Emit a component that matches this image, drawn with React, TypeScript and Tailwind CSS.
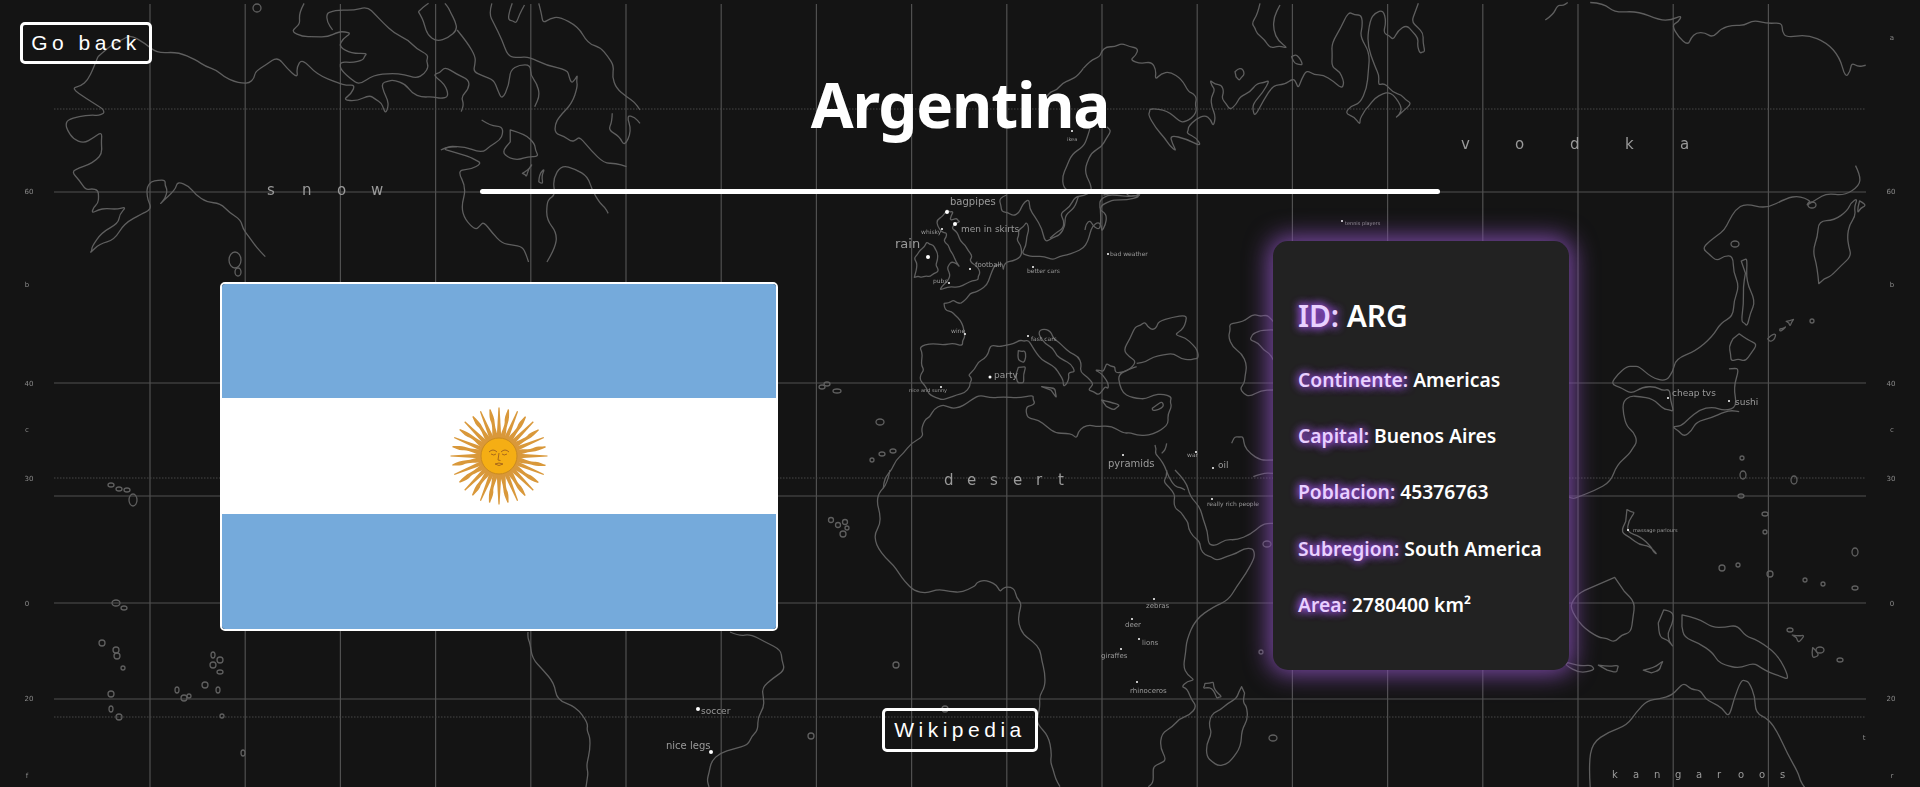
import React from 'react';

// coastlines traced per map region; each group has its own scale from the crop it was read off
const coastA = [
  // north america, x/2.45 y/3
  'M240 170 L215 240 L175 265 L250 325 L255 340 L225 345 L165 360 L165 390 L205 430 L250 395 L250 460 L215 495 L175 515 L210 570 L240 570 L240 610 L225 640 L260 625 L310 620 L290 670 L225 740 L220 760 L280 720 L350 640 L370 620 L360 580 L370 545 L405 540 L410 570 L390 615 L420 580 L435 545 L480 585 L540 610 L590 660 L610 710 L650 770',
  'M240 170 L280 130 L320 105 L385 160 L480 180 L530 210 L575 245 L610 250 L625 215 L680 170 L730 235 L740 175 L830 250 L870 255 L840 300 L905 285 L935 310 L945 340 L950 300 L935 250 L965 240 L1010 280 L1060 290 L1100 290 L1060 225 L1090 200 L1150 240 L1130 290 L1130 335',
  'M745 10 L735 70 L715 95 L770 110 L830 95 L860 100 L830 140 L900 160 L890 180 L835 185 L840 215 L880 255 L960 220 L1020 235 L1050 200 L1050 165 L1000 120 L940 70 L900 20 L830 30 L800 40 L815 90',
  'M1025 35 L1050 10 M1025 35 L1040 75 L1070 125 L1120 90 L1105 40 L1090 10 M1120 90 L1165 170 L1160 215 L1210 240 L1230 300 L1250 210 L1300 195 L1315 250 L1310 320',
  'M1180 360 L1230 380 L1225 420 L1180 460 L1080 445 L1150 470 L1180 490 L1120 510 L1130 620 L1165 690 L1185 665 L1230 730 L1280 740 L1295 786',
  'M1250 390 L1310 430 L1320 470 L1270 480 L1230 455 Z',
  'M1205 10 L1210 70 L1245 170 L1295 170 L1390 210 L1400 250 L1415 225 L1415 260 L1370 350 L1360 400 L1400 425 L1420 410 L1480 490 L1535 500',
  'M1340 786 L1365 700 L1340 610 L1360 585 L1375 495 L1440 530 L1470 610 L1490 640',
  'M1255 10 L1245 60 L1265 70 L1285 15 M1320 10 L1330 70 L1370 50 L1440 130 L1490 170 L1500 230 L1535 290 L1568 330',
  'M1500 340 L1490 390 L1530 440 L1535 345 L1568 370',
  'M1080 450 L1120 440 M1280 520 L1305 490 L1290 530 Z M1320 545 L1335 505 L1330 550 Z',
];

const coastB = [
  // europe, med, x/3 y/3
  'M433 262 L440 235 L432 205 L450 180 L470 155 L490 165 L503 190 L497 225 L505 245 L480 260 L455 262 Z',
  'M531 60 L500 90 L515 125 L530 130 L522 150 L535 165 L550 195 L570 232 L545 215 L532 235 L540 258 L520 285 L510 300 L540 290 L590 280 L625 270 L630 250 L615 225 L600 210 L605 195 L585 165 L565 135 L545 115 L570 95 L560 85 L540 90 L550 65 Z',
  'M710 15 L688 30 L695 65 L730 78 L755 50 L778 28 L795 80 L825 158 L870 135 L885 75 L925 20',
  'M572 340 L600 310 L630 300 L660 260 L675 225 L695 220 L700 240 L710 215 L745 205 L755 185 L740 150 L745 120 L770 95 L770 140 L755 190 L790 200 L850 210 L890 195 L940 175 L960 130 L985 95 L995 125 L1010 80 L990 60 L990 30 L1040 15 L1110 15',
  'M522 340 L530 362 L555 375 L580 410 L585 440 L578 468 L520 465 L448 470 L455 510 L462 540 L450 570 L470 595 L490 620 L515 630 L560 615 L600 590 L605 570 L595 555 L625 515 L655 490 L665 465 L710 465 L750 450 L775 450 L800 490 L835 520 L870 555 L880 590 L895 570 L895 550 L915 545 L880 510 L850 475 L810 440 L810 420 L835 420 L850 445 L880 470 L925 500 L930 545 L970 580 L955 600 L985 615 L1005 590 L1015 595 L1005 565 L975 540 L1000 545 L1010 520 L1035 530 L1040 550 L1100 515 L1060 480 L1095 410 L1125 395 L1150 420 L1165 395 L1250 375 L1240 415 L1215 435 L1270 465 L1285 505 L1260 510 L1210 490 L1150 500 L1100 520',
  'M522 340 L550 330 L572 340',
  'M1100 530 L1045 555 L1060 610 L1100 625 L1150 615 L1205 620 L1205 650 L1195 700 L1165 725 L1100 735 L1060 730 L980 710 L940 710 L920 745 L890 730 L830 710 L775 685 L770 650 L795 640 L790 615 L700 620 L630 615 L590 640 L545 655 L515 645 L480 680 L460 700 L460 740 L400 790 L365 840 L340 895',
  'M1155 765 L1155 790 L1185 830 L1215 890 L1245 900 M1190 760 L1175 790',
  'M1385 760 L1395 740 L1420 740 L1440 790 L1510 810 M1450 860 L1510 850',
  'M1510 395 L1490 375 L1450 372 L1378 400 L1375 440 L1415 490 L1425 560 L1410 595 L1440 620 L1510 600',
  'M1510 420 L1450 430 L1440 450 L1480 480 L1510 510',
  'M1150 5 L1100 15',
  'M815 590 L855 595 L860 625 Z M995 630 L1050 645 L1030 660 Z M1147 655 L1175 635 L1180 650 L1150 662 Z',
  'M745 482 L765 482 L762 518 L745 510 Z M745 532 L768 530 L762 578 L742 578 Z',
];

const coastC = [
  // africa, x/3 y/3
  'M360 0 L325 70 L330 130 L315 190 L325 235 L370 285 L405 335 L470 370 L540 365 L610 350 L620 338 L660 335 L690 365 L705 352 L735 360 L755 400 L745 460 L790 515 L815 570 L825 650 L810 710 L800 760 L845 850 L850 900 L870 950',
  'M1190 0 L1180 35 L1215 75 L1215 115 L1245 145 L1255 175 L1290 215 L1305 255 L1340 272 L1400 250 L1448 235 L1450 270 L1400 350 L1330 410 L1250 510 L1240 590 L1275 630 L1235 650 L1255 665 L1280 710 L1230 745 L1175 790 L1190 870 L1150 890 L1150 930 L1135 950',
  'M1215 0 L1260 80 L1300 150 L1315 220 L1340 225 L1400 210 L1475 165 L1510 160',
  'M1415 650 L1400 685 L1350 720 L1320 745 L1325 790 L1310 860 L1345 888 L1385 870 L1415 780 L1430 710 L1420 690 Z',
  'M1305 640 L1330 635 L1335 660 L1355 680 L1340 685 L1325 655 L1300 655 Z',
];

const coastD = [
  // scandinavia, russia, x/3 y/3
  'M200 380 L212 395 L185 440 L140 490 L140 530 L155 575 L105 590 L60 640 L70 685 L30 715',
  'M150 385 L130 440 L80 500 L70 560 L95 580',
  'M190 585 L250 565 L270 590 L300 590 L220 600 L180 620 L180 690 L150 660 L135 690',
  'M130 205 L180 170 L200 140 L245 130 L295 145 L270 180 L335 185 L345 240 L390 215 L445 275 L470 295 L470 330 L445 360 L420 365 L330 325 L325 345 L375 415 L410 455 L390 405 L485 440 L440 400 L445 380 L495 345 L520 380 L515 320 L525 270 L510 240 L545 255 L545 295 L570 330 L600 290 L650 250 L690 240 L640 310 L645 350 L700 255 L760 235 L775 265 L800 210 L850 225 L905 265 L910 240 L875 200 L875 130 L925 35 L965 45 L960 110 L985 215 L960 310 L915 340 L960 375 L970 340 L985 320 L1030 280 L1060 285 L1085 325 L1065 355 L1115 310 L1085 285 L1040 255 L1015 255 L1005 200 L990 60 L1030 30 L1030 100 L1060 120 L1100 75 L1135 115 L1140 160 L1155 155 L1150 100 L1115 65 L1135 10',
  'M660 10 L635 70 L650 100 L690 145 L745 145 L700 90 L720 15',
  'M585 215 L605 205 L612 225 L598 242 Z',
  'M755 170 L770 165 L788 195 L765 190 Z',
  'M130 205 L90 240 L50 270 L20 290',
];

const coastE = [
  // east asia and oceania, x/2.45 y/1.992
  'M650 40 L680 10 L705 5',
  'M760 5 L820 25 L930 40 L985 30 L960 50 L1000 90 L1020 65 L1060 75 L1110 50 L1160 40 L1230 45 L1240 75 L1340 85 L1385 155 L1400 125 L1435 130',
  'M1410 330 L1420 370 L1340 385 L1290 410 L1300 400 L1240 395 L1140 405 L1100 440 L1070 470 L1035 495 L1070 520 L1110 510 L1125 570 L1110 630 L1060 670 L970 715 L945 760 L880 730 L850 730 L810 765 L860 785 L920 770 L955 775 L965 820 L940 815 L880 790 L840 800 L850 850 L875 880 L855 905 L810 960 L730 990 L708 990',
  'M1320 565 L1305 500 L1320 440 L1390 420 L1415 395 L1410 430 L1390 470 L1400 510 L1350 550 Z',
  'M1420 400 L1435 410 L1415 425 Z',
  'M1130 520 L1145 515 L1165 600 L1145 650 L1130 640 L1135 570 Z',
  'M1125 665 L1170 685 L1140 720 L1105 720 L1100 690 Z',
  'M1100 735 L1125 735 L1120 810 L1060 810 L1000 835 L960 850 L990 870 L1020 840 L1090 820 L1125 820',
  'M850 1015 L870 1020 L850 1060 L910 1090 L925 1105 L880 1085 L835 1060 Z',
  'M1240 640 L1260 635 L1250 650 Z M1195 675 L1215 665 L1205 680 Z M1225 655 L1240 650 L1225 660 Z',
  'M820 1150 L735 1180 L710 1210 L780 1270 L820 1280 L860 1260 L870 1200 Z',
  'M940 1215 L965 1225 L950 1260 L965 1290 L930 1270 Z',
  'M985 1225 L1060 1250 L1120 1245 L1170 1275 L1250 1355 L1200 1340 L1160 1320 L1090 1325 L1060 1300 L990 1270 Z',
  'M705 1320 L760 1325 L770 1335 L700 1325 Z M780 1325 L830 1325 L825 1340 Z M890 1335 L940 1315 L930 1335 Z',
  'M760 1568 L765 1480 L850 1445 L900 1395 L960 1385 L990 1360 L1030 1375 L1060 1400 L1100 1430 L1130 1355 L1150 1360 L1165 1420 L1220 1460 L1270 1540 L1285 1568',
  'M1255 1265 L1285 1265 L1270 1280 Z M1305 1290 L1320 1305 L1305 1310 Z',
];

// the traced points are sparse, so add a wobble and round them off to read as a coast
function organic(d: string) {
  return d
    .split('M')
    .filter((s) => s.trim())
    .map((sub) => {
      const closed = sub.includes('Z');
      const nums = sub.replace(/[LZ]/g, ' ').trim().split(/\s+/).map(Number);
      const pts: [number, number][] = [];
      for (let i = 0; i < nums.length; i += 2) pts.push([nums[i], nums[i + 1]]);
      const dense: [number, number][] = [];
      const count = closed ? pts.length : pts.length - 1;
      for (let i = 0; i < count; i++) {
        const a = pts[i];
        const b = pts[(i + 1) % pts.length];
        const dx = b[0] - a[0];
        const dy = b[1] - a[1];
        const k = Math.sin(a[0] * 0.78 + a[1] * 12.98 + i) * 0.16;
        dense.push(a, [a[0] + dx / 2 - dy * k, a[1] + dy / 2 + dx * k]);
      }
      if (!closed) dense.push(pts[pts.length - 1]);
      let out = `M${dense[0][0]} ${dense[0][1]}`;
      for (let i = 1; i < dense.length - 1; i++) {
        const mx = (dense[i][0] + dense[i + 1][0]) / 2;
        const my = (dense[i][1] + dense[i + 1][1]) / 2;
        out += ` Q${dense[i][0]} ${dense[i][1]} ${mx} ${my}`;
      }
      const last = dense[dense.length - 1];
      return out + ` L${last[0]} ${last[1]}` + (closed ? ' Z' : '');
    })
    .join(' ');
}

// small islands as cx, cy, rx, ry in full page pixels
const islands: [number, number, number, number][] = [
  [822, 387, 3, 2], [827, 384, 3, 2], [837, 391, 4, 2], [880, 422, 4, 3], [882, 454, 3, 2], [893, 451, 3, 2], [872, 460, 2, 2],
  [831, 520, 2.5, 2.5], [838, 525, 2.5, 2.5], [845, 522, 2.5, 2.5], [847, 528, 2, 2], [843, 534, 3, 3],
  [896, 665, 3, 3], [945, 709, 3, 3], [811, 736, 3, 3], [1273, 738, 4, 3], [1261, 652, 2, 2], [1267, 544, 4, 3],
  [111, 485, 3, 2], [119, 489, 3, 2], [127, 490, 3, 2], [133, 500, 4, 6], [116, 603, 4, 3], [124, 608, 3, 2],
  [116, 650, 3, 3], [123, 668, 2, 2], [102, 643, 3, 3], [117, 656, 3, 3], [111, 694, 3, 3], [119, 717, 3, 3],
  [111, 709, 2, 3], [213, 655, 2, 3], [213, 665, 3, 3], [220, 660, 3, 3], [220, 672, 3, 2], [218, 690, 2, 3],
  [205, 685, 3, 3], [184, 698, 3, 3], [189, 696, 2, 2], [177, 690, 2, 3], [222, 716, 2, 2], [243, 753, 2, 3],
  [257, 8, 4, 4], [1735, 244, 4, 3], [1812, 205, 4, 3], [1812, 321, 2, 2], [1794, 480, 3, 4], [1741, 496, 3, 2],
  [1742, 458, 2, 2], [1743, 475, 3, 4], [1765, 514, 3, 2], [1765, 532, 2, 2], [1855, 552, 3, 4], [1722, 568, 3, 3],
  [1738, 565, 2, 2], [1770, 574, 3, 3], [1805, 580, 2, 2], [1823, 584, 2, 2], [1855, 588, 3, 2],
  [1790, 630, 3, 2], [1820, 650, 4, 3], [1840, 660, 3, 2], [235, 260, 6, 8], [238, 272, 3, 4],
];

type MapLabel = [string, number, number, number];

const labels: MapLabel[] = [
  ['bagpipes', 950, 205, 10], ['men in skirts', 961, 232, 9], ['whisky', 921, 234, 6], ['rain', 895, 248, 13],
  ['football', 975, 267, 7], ['pubs', 933, 283, 6], ['better cars', 1027, 273, 6], ['bad weather', 1110, 256, 6],
  ['wine', 951, 333, 6], ['fast cars', 1031, 341, 6], ['party', 994, 378, 9], ['nice and sunny', 909, 392, 5],
  ['pyramids', 1108, 467, 10], ['war', 1187, 457, 6], ['oil', 1218, 468, 9], ['really rich people', 1207, 506, 6],
  ['zebras', 1146, 608, 7], ['deer', 1125, 627, 7], ['lions', 1142, 645, 7], ['giraffes', 1101, 658, 7],
  ['rhinoceros', 1130, 693, 7], ['soccer', 701, 714, 9], ['nice legs', 666, 749, 10], ['ikea', 1067, 141, 5],
  ['tennis players', 1345, 225, 5], ['cheap tvs', 1672, 396, 9], ['sushi', 1735, 405, 9], ['massage parlours', 1633, 532, 5],
];

const dots: [number, number, number][] = [
  [947, 212, 2], [955, 224, 2], [942, 229, 1], [928, 257, 2], [970, 269, 1], [949, 283, 1], [1033, 267, 1], [1108, 254, 1],
  [965, 334, 1], [1028, 336, 1], [990, 377, 1.5], [941, 387, 1], [1123, 455, 1], [1196, 452, 1], [1213, 468, 1], [1212, 499, 1],
  [1154, 599, 1], [1132, 619, 1], [1139, 639, 1], [1121, 649, 1], [1137, 682, 1], [698, 709, 2], [711, 752, 2],
  [1072, 131, 1], [1342, 221, 1], [1668, 398, 1], [1729, 401, 1], [1628, 530, 1],
];

const spaced: [string, number[], number, number][] = [
  ['snow', [267, 302, 337, 371], 195, 15],
  ['vodka', [1461, 1515, 1570, 1625, 1680], 149, 15],
  ['desert', [944, 967, 990, 1013, 1036, 1058], 485, 15],
  ['kangaroos', [1612, 1633, 1654, 1675, 1696, 1717, 1738, 1759, 1780], 778, 10],
];

const edgeMarks: [string, number, number][] = [
  ['60', 29, 194], ['b', 27, 287], ['40', 29, 386], ['c', 27, 432], ['30', 29, 481], ['0', 27, 606], ['20', 29, 701], ['f', 27, 778],
  ['a', 1892, 40], ['60', 1891, 194], ['b', 1892, 287], ['40', 1891, 386], ['c', 1892, 432], ['30', 1891, 481], ['0', 1892, 606], ['20', 1891, 701], ['t', 1864, 740], ['r', 1892, 778],
];

function Coast({ paths, transform }: { paths: string[]; transform: string }) {
  return (
    <g transform={transform}>
      {paths.map((d) => (
        <path key={d} d={organic(d)} vectorEffect="non-scaling-stroke" />
      ))}
    </g>
  );
}

function WorldMap() {
  const verticals = Array.from({ length: 18 }, (_, i) => 150 + 95.2 * i);
  return (
    <svg className="absolute inset-0 blur-[0.3px]" width="1920" height="787" viewBox="0 0 1920 787" fill="none">
      <g stroke="#505050" strokeWidth="1.2">
        {verticals.map((x) => (
          <line key={x} x1={x} y1="4" x2={x} y2="787" />
        ))}
        {[192, 383, 496, 603, 699].map((y) => (
          <line key={y} x1="54" y1={y} x2="1866" y2={y} />
        ))}
      </g>
      <g stroke="#474747" strokeWidth="1" strokeDasharray="1.5 1.5">
        {[109, 478, 717].map((y) => (
          <line key={y} x1="54" y1={y} x2="1866" y2={y} />
        ))}
      </g>
      <g stroke="#5f5f5f" strokeWidth="1.3" strokeLinejoin="round">
        <Coast paths={coastA} transform="scale(0.40816 0.33333)" />
        <Coast paths={coastB} transform="translate(770 190) scale(0.33333)" />
        <Coast paths={coastC} transform="translate(770 470) scale(0.33333)" />
        <Coast paths={coastD} transform="translate(1040 0) scale(0.33333)" />
        <Coast paths={coastE} transform="translate(1280 0) scale(0.40816 0.50201)" />
        {/* south america below the flag */}
        <path d={organic('M528 632 L530 643 L543 670 L557 700 L588 723 L590 737 L587 763 L588 773 L586 787')} />
        <path d={organic('M730 632 L750 634 L781 650 L785 670 L762 688 L764 707 L758 730 L748 745 L720 753 L709 773 L709 787')} />
        {islands.map(([cx, cy, rx, ry]) => (
          <ellipse key={`${cx}-${cy}`} cx={cx} cy={cy} rx={rx} ry={ry} />
        ))}
      </g>
      <g fill="#fff">
        {dots.map(([cx, cy, r]) => (
          <circle key={`${cx}-${cy}`} cx={cx} cy={cy} r={r} />
        ))}
      </g>
      <g fill="#9a9a9a" fontFamily="'DejaVu Sans', sans-serif">
        {labels.map(([text, x, y, size]) => (
          <text key={text} x={x} y={y} fontSize={size}>{text}</text>
        ))}
        {spaced.map(([word, xs, y, size]) => (
          <text key={word} x={xs.join(' ')} y={y} fontSize={size}>{word}</text>
        ))}
        {edgeMarks.map(([text, x, y], i) => (
          <text key={i} x={x} y={y} fontSize="7" textAnchor="middle" fill="#8a8a8a">{text}</text>
        ))}
      </g>
    </svg>
  );
}

function Sun() {
  const rays = Array.from({ length: 32 }, (_, i) => i * 11.25);
  return (
    <svg width="100" height="100" viewBox="-50 -50 100 100">
      {rays.map((deg, i) => (
        <path
          key={deg}
          transform={`rotate(${deg})`}
          d={i % 2 === 0 ? 'M-2.4 -16 L-0.6 -48.5 L0.6 -48.5 L2.4 -16 Z' : 'M-2.4 -16 C-3.4 -24 0.6 -30 -1.6 -37 C-2 -41 -0.6 -45 -0.4 -47.5 L0.8 -47.5 C2 -42 3 -38 2.2 -33 C1.4 -28 3.2 -22 2.4 -16 Z'}
          fill="#d9983a"
        />
      ))}
      <circle r="18" fill="#f5ae14" stroke="#c98a22" strokeWidth="1" />
      <g fill="none" stroke="#a9691a" strokeWidth="1">
        <path d="M-10 -4 Q-6 -8 -2 -4 M2 -4 Q6 -8 10 -4" />
        <path d="M-8 -2 Q-5 0 -3 -2 M3 -2 Q5 0 8 -2" />
        <path d="M0 -3 L-1 4 L1.5 4.5" />
        <path d="M-4 8 Q0 6 4 8 Q0 11 -4 8" />
      </g>
    </svg>
  );
}

function Flag() {
  return (
    <div className="w-[558px] h-[349px] shrink-0 flex flex-col border-2 border-white rounded-[5px] overflow-hidden">
      <div className="h-[114px] bg-[#75aadb]" />
      <div className="h-[116px] bg-white flex items-center justify-center">
        <Sun />
      </div>
      <div className="flex-1 bg-[#75aadb]" />
    </div>
  );
}

const facts = [
  ['Continente:', 'Americas'],
  ['Capital:', 'Buenos Aires'],
  ['Poblacion:', '45376763'],
  ['Subregion:', 'South America'],
  ['Area:', '2780400 km²'],
];

function InfoCard() {
  return (
    <div className="w-[296px] h-[429px] shrink-0 flex flex-col pl-[25px] pt-[55px] bg-[#222222] rounded-[15px] shadow-[0_0_25px_4px_#7d4aa8] text-white font-semibold">
      <p className="text-[30px] leading-[40px] tracking-[-0.1px] font-semibold">
        <span className="text-[#e9d0ff] [text-shadow:0_0_8px_#a855f7,0_0_10px_#a855f7]">ID:</span> ARG
      </p>
      {facts.map(([label, value], i) => (
        <p key={label} className={`${i === 0 ? 'mt-[30px]' : 'mt-[28.2px]'} text-[19.3px] leading-[28px] whitespace-nowrap`}>
          <span className="text-[#e9d0ff] [text-shadow:0_0_8px_#a855f7,0_0_10px_#a855f7]">{label}</span> {value}
        </p>
      ))}
    </div>
  );
}

export default function App() {
  return (
    <div className="relative w-full h-[787px] overflow-hidden bg-[#141414] font-['Noto_Sans',sans-serif]">
      <WorldMap />
      <a className="absolute top-[22px] left-[20px] h-[42px] w-[132px] flex items-center justify-center border-[3px] border-white rounded-[5px] text-white text-[21px] tracking-[4.5px] font-['Liberation_Sans',sans-serif]">
        Go back
      </a>
      <main className="relative flex flex-col items-center">
        <h1 className="mt-[72px] h-[64px] text-[62px] leading-[64px] font-bold text-white tracking-[-1.2px]">Argentina</h1>
        <div className="mt-[53px] w-1/2 h-[5px] rounded-full bg-white" />
        <div className="mt-[47px] w-full flex items-start pl-[220px] gap-[495px]">
          <div className="mt-[41px]">
            <Flag />
          </div>
          <InfoCard />
        </div>
        <a className="mt-[38px] h-[44px] w-[156px] flex items-center justify-center border-[3px] border-white rounded-[5px] text-white text-[21px] tracking-[4.5px] font-['Liberation_Sans',sans-serif]">
          Wikipedia
        </a>
      </main>
    </div>
  );
}
